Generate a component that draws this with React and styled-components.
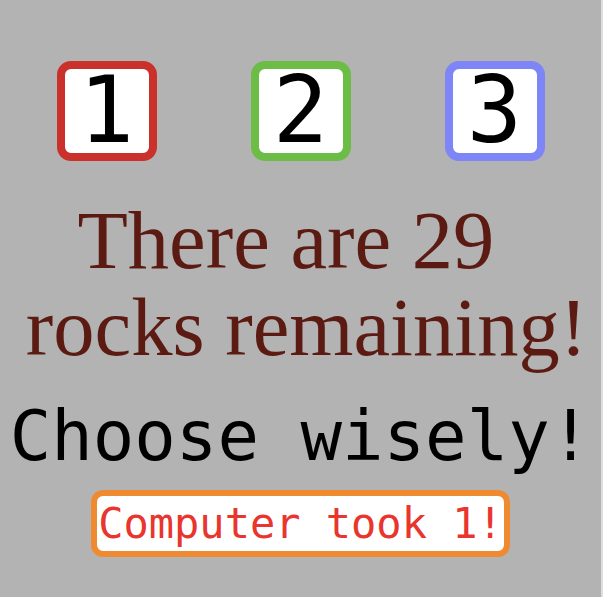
import React from 'react';
import styled, { createGlobalStyle } from 'styled-components';

const GlobalStyle = createGlobalStyle`
  html, body {
    margin: 0;
    padding: 0;
    background: #dedede;
  }
`;

const Stage = styled.div`
  width: 601px;
  height: 597px;
  background: #b3b3b3;
  display: flex;
  flex-direction: column;
  align-items: center;
  padding-top: 61px;
  box-sizing: border-box;
  overflow: hidden;
`;

const Choices = styled.div`
  display: flex;
  gap: 94px;
`;

const ChoiceButton = styled.button`
  width: 100px;
  height: 100px;
  box-sizing: border-box;
  border: 8px solid ${props => props.color};
  border-radius: 14px;
  background: #ffffff;
  padding: 0;
  font-family: "DejaVu Sans Mono", monospace;
  font-size: 92px;
  line-height: 84px;
  color: #000000;
  cursor: pointer;
  display: flex;
  justify-content: center;
`;

const Remaining = styled.p`
  margin: 36px 0 0;
  width: 100%;
  box-sizing: border-box;
  padding-left: 12px;
  text-align: center;
  font-family: "Liberation Serif", "Times New Roman", serif;
  font-size: 82.5px;
  line-height: 87px;
  color: #5b1b12;
`;

const Prompt = styled.div`
  margin-top: 25px;
  font-family: "DejaVu Sans Mono", monospace;
  font-size: 69px;
  line-height: 80px;
  color: #000000;
`;

const Status = styled.div`
  margin-top: 14px;
  padding: 0 1px;
  border: 6px solid #ef8a30;
  border-radius: 12px;
  background: #ffffff;
  font-family: "DejaVu Sans Mono", monospace;
  font-size: 42px;
  line-height: 55px;
  color: #e8352e;
`;

const choices = [
  { value: 1, color: '#c9312a' },
  { value: 2, color: '#6cbd45' },
  { value: 3, color: '#7e85f6' },
];

export default function App() {
  const rocks = 29;
  return (
    <>
      <GlobalStyle />
      <Stage>
        <Choices>
          {choices.map(c => (
            <ChoiceButton key={c.value} color={c.color}>
              {c.value}
            </ChoiceButton>
          ))}
        </Choices>
        <Remaining>
          There are {rocks}{'\u00a0\u00a0'} rocks remaining!
        </Remaining>
        <Prompt>Choose wisely!</Prompt>
        <Status>Computer took 1!</Status>
      </Stage>
    </>
  );
}
